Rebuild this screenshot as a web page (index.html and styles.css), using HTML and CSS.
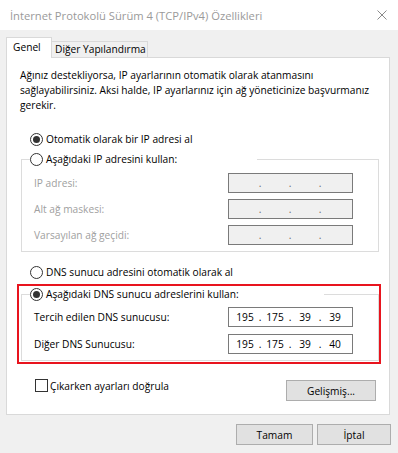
FILE: index.html
```html
<!DOCTYPE html>
<html lang="tr">
<head>
    <meta charset="UTF-8">
    <meta name="viewport" content="width=device-width, initial-scale=1.0">
    <title>İnternet Protokolü Sürüm 4 (TCP/IPv4) Özellikleri</title>
    <link rel="stylesheet" href="styles.css">
</head>
<body>
    <div class="titlebar">
        <span class="title">İnternet Protokolü Sürüm 4 (TCP/IPv4) Özellikleri</span>
        <svg class="close" width="10" height="10" viewBox="0 0 10 10">
            <path d="M0.5 0.5 L9.5 9.5 M9.5 0.5 L0.5 9.5" stroke="#8a8a8a" stroke-width="1" fill="none"/>
        </svg>
    </div>

    <div class="tabs">
        <div class="tab active">Genel</div>
        <div class="tab">Diğer Yapılandırma</div>
    </div>

    <div class="panel">
        <p class="intro">Ağınız destekliyorsa, IP ayarlarının otomatik olarak atanmasını<br>sağlayabilirsiniz. Aksi halde, IP ayarlarınız için ağ yöneticinize başvurmanız<br>gerekir.</p>

        <div class="radio option checked"><span class="circle"></span>Otomatik olarak bir IP adresi al</div>

        <fieldset class="group">
            <legend class="radio legend-ip"><span class="circle"></span>Aşağıdaki IP adresini kullan:</legend>
            <div class="rows">
                <div class="row disabled">
                    <span>IP adresi:</span>
                    <div class="ipbox"><span></span><i>.</i><span></span><i>.</i><span></span><i>.</i><span></span></div>
                </div>
                <div class="row disabled">
                    <span>Alt ağ maskesi:</span>
                    <div class="ipbox"><span></span><i>.</i><span></span><i>.</i><span></span><i>.</i><span></span></div>
                </div>
                <div class="row disabled">
                    <span>Varsayılan ağ geçidi:</span>
                    <div class="ipbox"><span></span><i>.</i><span></span><i>.</i><span></span><i>.</i><span></span></div>
                </div>
            </div>
        </fieldset>

        <div class="radio option dns-auto"><span class="circle"></span>DNS sunucu adresini otomatik olarak al</div>

        <fieldset class="group dns">
            <legend class="radio legend-dns checked"><span class="circle"></span>Aşağıdaki DNS sunucu adreslerini kullan:</legend>
            <div class="rows">
                <div class="row">
                    <span>Tercih edilen DNS sunucusu:</span>
                    <div class="ipbox"><span>195</span><i>.</i><span>175</span><i>.</i><span>39</span><i>.</i><span>39</span></div>
                </div>
                <div class="row">
                    <span>Diğer DNS Sunucusu:</span>
                    <div class="ipbox"><span>195</span><i>.</i><span>175</span><i>.</i><span>39</span><i>.</i><span>40</span></div>
                </div>
            </div>
        </fieldset>

        <div class="bottom">
            <label class="checkbox"><span class="box"></span>Çıkarken ayarları doğrula</label>
            <button class="button advanced">Gelişmiş...</button>
        </div>

        <!-- kırmızı işaret çerçevesi -->
        <div class="highlight"></div>
    </div>

    <div class="footer">
        <button class="button ok">Tamam</button>
        <button class="button cancel">İptal</button>
    </div>
</body>
</html>
```

FILE: styles.css
```css
* {
    box-sizing: border-box;
}

body {
    margin: 0;
    width: 398px;
    height: 453px;
    overflow: hidden;
    background-color: #f0f0f0;
    font-family: "Open Sans", "Noto Sans", sans-serif;
    font-size: 10.2px;
    color: #000;
}

.titlebar {
    height: 30px;
    background: white;
    display: flex;
    align-items: center;
    justify-content: space-between;
    padding: 0 11px 0 10px;
}

.title {
    color: #9a9a9a;
    font-size: 11.2px;
}

.close {
    display: block;
}

.tabs {
    display: flex;
    align-items: flex-end;
    padding: 7px 0 0 6px;
    height: 27px;
}

.tab {
    border: 1px solid #d9d9d9;
    border-bottom: none;
    white-space: nowrap;
}

.tab.active {
    width: 46px;
    height: 21px;
    margin-bottom: -1px;
    padding-left: 6px;
    line-height: 19px;
    background: white;
    position: relative;
    z-index: 1;
}

.tab:not(.active) {
    width: 97px;
    height: 16px;
    margin-left: -1px;
    padding-left: 3px;
    line-height: 15px;
}

.panel {
    position: relative;
    margin-left: 6px;
    width: 384px;
    height: 358px;
    background: white;
    border: 1px solid #d9d9d9;
}

.intro {
    margin: 10px 0 0 13px;
    line-height: 15px;
    white-space: nowrap;
}

.radio {
    display: flex;
    align-items: center;
    height: 20px;
    white-space: nowrap;
}

.circle {
    width: 13px;
    height: 13px;
    border: 1px solid #333;
    border-radius: 50%;
    background: white;
    margin-right: 3px;
    display: flex;
    align-items: center;
    justify-content: center;
    flex-shrink: 0;
}

.checked .circle::after {
    content: "";
    width: 7px;
    height: 7px;
    border-radius: 50%;
    background: #333;
}

.option {
    margin: 16px 0 0 23px;
}

.dns-auto {
    margin-top: 10px;
}

.group {
    margin: 0 0 0 14px;
    padding: 0;
    width: 358px;
    border: 1px solid #dcdcdc;
}

.group.dns {
    margin-top: 2px;
}

.group legend {
    padding: 0;
    margin-left: 8px;
}

.legend-ip {
    width: 227px;
}

.legend-dns {
    width: 294px;
}

.rows {
    display: flex;
    flex-direction: column;
    gap: 6px;
    padding: 4px 25px 6px 12px;
}

.dns .rows {
    gap: 7px;
    padding-top: 3px;
}

.row {
    display: flex;
    justify-content: space-between;
    align-items: center;
    height: 20px;
}

.row.disabled {
    color: #a0a0a0;
}

.ipbox {
    width: 125px;
    height: 20px;
    border: 1px solid #7a7a7a;
    background: white;
    color: #000;
    display: grid;
    grid-template-columns: 24px 6px 24px 6px 24px 6px 24px;
    align-items: center;
    padding-left: 4px;
    line-height: 18px;
}

.ipbox span,
.ipbox i {
    text-align: center;
    font-style: normal;
}

.disabled .ipbox {
    background: #f0f0f0;
    color: #6d6d6d;
}

.bottom {
    display: flex;
    justify-content: space-between;
    align-items: flex-start;
    margin: 18px 13px 0 28px;
}

.checkbox {
    display: flex;
    align-items: center;
    height: 13px;
    white-space: nowrap;
}

.box {
    width: 13px;
    height: 13px;
    border: 1px solid #333;
    background: white;
    margin-right: 2px;
}

.button {
    height: 21px;
    padding: 0;
    background-color: #e1e1e1;
    border: 1px solid #adadad;
    font: inherit;
    color: #000;
}

.advanced {
    width: 90px;
    margin-top: 1px;
}

.footer {
    display: flex;
    justify-content: flex-end;
    gap: 4px;
    padding: 9px 7px 0 0;
}

.ok {
    width: 77px;
}

.cancel {
    width: 74px;
}

.highlight {
    position: absolute;
    left: 10px;
    top: 226px;
    width: 364px;
    height: 80px;
    border: 2px solid #e8141e;
    pointer-events: none;
}
```
